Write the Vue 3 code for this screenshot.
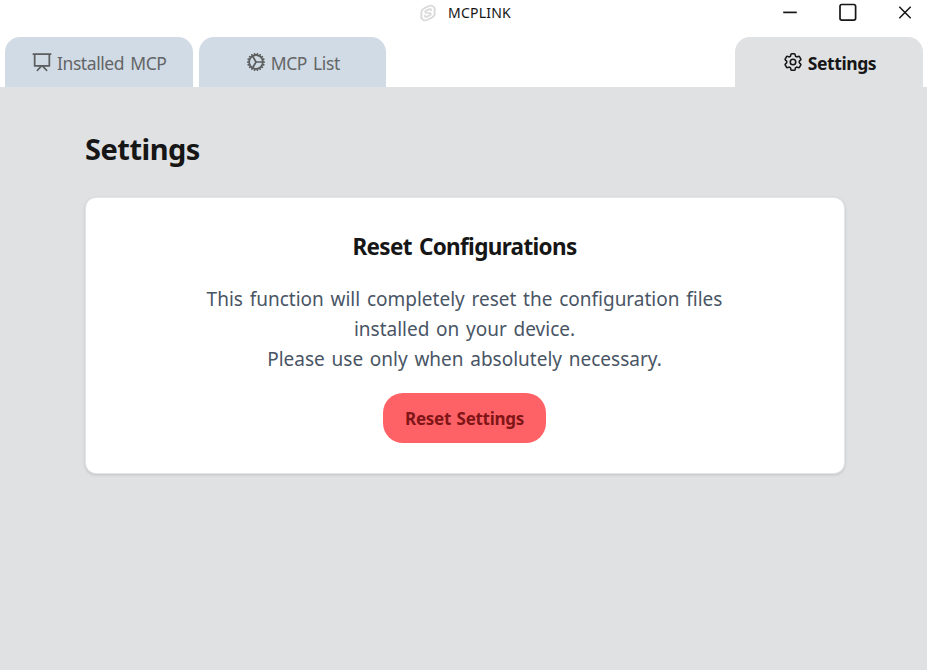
<script setup>
const description = [
  'This function will completely reset the configuration files',
  'installed on your device.',
  'Please use only when absolutely necessary.',
]
</script>

<template>
  <div class="window">
    <header class="titlebar">
      <span></span>
      <div class="brand">
        <svg class="brand-icon" viewBox="0 0 16 18" fill="none" stroke="#dadada" stroke-width="1.9" stroke-linecap="round" stroke-linejoin="round">
          <path d="M8.4 1.9C11.8.1 15.4 3 14.2 6.8C15.2 9.2 14.6 11.6 12.4 13.1L7.6 16.1C4.2 17.9.6 15 1.8 11.2C.8 8.8 1.4 6.4 3.6 4.9ZM10.9 5.9C10.5 4.7 9.6 4.7 8.6 5.3L5.7 7.1C4.6 7.9 5 9.1 6.2 9.1L9.8 8.9C11 8.9 11.4 10.1 10.3 10.9L7.4 12.7C6.4 13.3 5.5 13.3 5.1 12.1" />
        </svg>
        <span class="brand-name">MCPLINK</span>
      </div>
      <div class="controls">
        <svg viewBox="0 0 24 24"><path d="M5.2 11.4h13.6" stroke-width="1.7" /></svg>
        <svg viewBox="0 0 24 24"><rect x="4" y="3.5" width="15.6" height="15.6" rx="1.8" stroke-width="1.7" /></svg>
        <svg viewBox="0 0 24 24"><path d="M6.3 5.8l11.4 11.4M17.7 5.8l-11.4 11.4" stroke-width="1.5" /></svg>
      </div>
    </header>

    <nav class="tabs">
      <button class="tab">
        <svg class="icon easel" viewBox="0 0 24 24"><path d="M2.5 3.3h19M4 3.3v13h16v-13M11 16.8l-4 4.2M13 16.8l4 4.2" /></svg>
        <span class="label">Installed MCP</span>
      </button>
      <button class="tab">
        <svg class="icon cog" viewBox="0 0 24 24"><path d="M4.5 12a7.5 7.5 0 0 0 15 0m-15 0a7.5 7.5 0 1 1 15 0m-15 0H3m16.5 0H21m-1.5 0H12m-8.457 3.077 1.41-.513m14.095-5.13 1.41-.513M5.106 17.785l1.15-.964m11.49-9.642 1.149-.964M7.501 19.795l.75-1.3m7.5-12.99.75-1.3m-6.063 16.658.26-1.477m2.605-14.772.26-1.477m0 17.726-.26-1.477M10.698 4.614l-.26-1.477M16.5 19.794l-.75-1.299M7.5 4.205 12 12m6.894 5.785-1.149-.964M6.256 7.178l-1.15-.964m15.352 8.864-1.41-.513M4.954 9.435l-1.41-.514M12.002 12l-3.75 6.495" /></svg>
        <span class="label">MCP List</span>
      </button>
      <button class="tab active">
        <svg class="icon" viewBox="0 0 24 24"><path d="M9.594 3.94c.09-.542.56-.94 1.11-.94h2.593c.55 0 1.02.398 1.11.94l.213 1.281c.063.374.313.686.645.87.074.04.147.083.22.127.325.196.72.257 1.075.124l1.217-.456a1.125 1.125 0 0 1 1.37.49l1.296 2.247a1.125 1.125 0 0 1-.26 1.431l-1.003.827c-.293.241-.438.613-.43.992a7.723 7.723 0 0 1 0 .255c-.008.378.137.75.43.991l1.004.827c.424.35.534.955.26 1.43l-1.298 2.247a1.125 1.125 0 0 1-1.369.491l-1.217-.456c-.355-.133-.75-.072-1.076.124a6.47 6.47 0 0 1-.22.128c-.331.183-.581.495-.644.869l-.213 1.281c-.09.543-.56.94-1.11.94h-2.594c-.55 0-1.019-.398-1.11-.94l-.213-1.281c-.062-.374-.312-.686-.644-.87a6.52 6.52 0 0 1-.22-.127c-.325-.196-.72-.257-1.076-.124l-1.217.456a1.125 1.125 0 0 1-1.369-.49l-1.297-2.247a1.125 1.125 0 0 1 .26-1.431l1.004-.827c.292-.24.437-.613.43-.991a6.932 6.932 0 0 1 0-.255c.007-.38-.138-.751-.43-.992l-1.004-.827a1.125 1.125 0 0 1-.26-1.43l1.297-2.247a1.125 1.125 0 0 1 1.37-.491l1.216.456c.356.133.751.072 1.076-.124.072-.044.146-.086.22-.128.332-.183.582-.495.644-.869l.214-1.28Z" /><path d="M15 12a3 3 0 1 1-6 0 3 3 0 0 1 6 0Z" /></svg>
        <span class="label">Settings</span>
      </button>
    </nav>

    <main class="content">
      <h1>Settings</h1>
      <section class="card">
        <h2>Reset Configurations</h2>
        <p>
          <span v-for="line in description" :key="line" class="line">{{ line }}</span>
        </p>
        <button class="reset">Reset Settings</button>
      </section>
    </main>
  </div>
</template>

<style>
body {
  margin: 0;
  background: #fff;
}
</style>

<style scoped>
.window {
  display: flex;
  flex-direction: column;
  width: 100%;
  height: 670px;
  overflow: hidden;
  font-family: "Noto Sans", "Open Sans", sans-serif;
  color: #161616;
  background: #fff;
}
button {
  margin: 0;
  padding: 0;
  border: 0;
  font: inherit;
}
.titlebar {
  display: grid;
  grid-template-columns: 1fr auto 1fr;
  align-items: center;
  height: 25px;
  flex: none;
}
.brand {
  display: flex;
  align-items: center;
  gap: 12px;
  padding-left: 4px;
}
.brand-icon {
  width: 16px;
  height: 18px;
  transform: rotate(6deg);
}
.brand-name {
  font-size: 14px;
  line-height: 24px;
  letter-spacing: 0.2px;
}
.controls {
  display: flex;
  justify-content: flex-end;
  gap: 33.5px;
  padding-right: 10px;
}
.controls svg {
  width: 24px;
  height: 24px;
  fill: none;
  stroke: #161616;
}
.tabs {
  display: flex;
  gap: 6px;
  flex: none;
  height: 50px;
  padding: 12px 4px 0 5px;
}
.tab {
  display: flex;
  align-items: center;
  justify-content: center;
  gap: 4px;
  width: 187.5px;
  border-radius: 15px 15px 0 0;
  background: #d1dbe5;
  color: #636566;
}
.tab.active {
  width: 188px;
  margin-left: auto;
  background: #e0e1e3;
  color: #161616;
  font-weight: 700;
}
.icon {
  width: 22px;
  height: 22px;
  flex: none;
  fill: none;
  stroke: currentColor;
  stroke-width: 1.7;
  stroke-linecap: round;
  stroke-linejoin: round;
}
.icon.easel,
.icon.cog {
  stroke: #5b5d5e;
  stroke-width: 1.9;
}
.label {
  padding-top: 2px;
  font-size: 17.5px;
  line-height: 24px;
  letter-spacing: -0.42px;
  word-spacing: 2px;
  white-space: nowrap;
}
.content {
  flex: 1;
  padding: 40px 82px 0 85px;
  background: #e0e1e3;
}
h1 {
  margin: 0 0 26px;
  font-size: 29px;
  line-height: 44px;
  font-weight: 700;
  letter-spacing: -0.5px;
}
.card {
  display: flex;
  flex-direction: column;
  align-items: center;
  box-sizing: border-box;
  height: 277px;
  padding: 34px 1px 0 0;
  border: 1px solid #e3e5e8;
  border-radius: 11px;
  background: #fff;
  box-shadow: 0 1px 3px rgba(0, 0, 0, 0.14);
}
h2 {
  margin: 0 0 22px;
  font-size: 22.5px;
  line-height: 30px;
  font-weight: 700;
  letter-spacing: -0.67px;
  word-spacing: 2px;
}
p {
  margin: 0 0 19px;
  color: #495565;
  font-size: 19px;
  line-height: 30px;
  text-align: center;
  word-spacing: 1.8px;
}
.line {
  display: block;
  white-space: nowrap;
}
.reset {
  width: 163px;
  height: 50px;
  border-radius: 20px;
  background: #ff6266;
  color: #801518;
  font-size: 17px;
  font-weight: 700;
  letter-spacing: -0.3px;
  word-spacing: 1.5px;
}
</style>
